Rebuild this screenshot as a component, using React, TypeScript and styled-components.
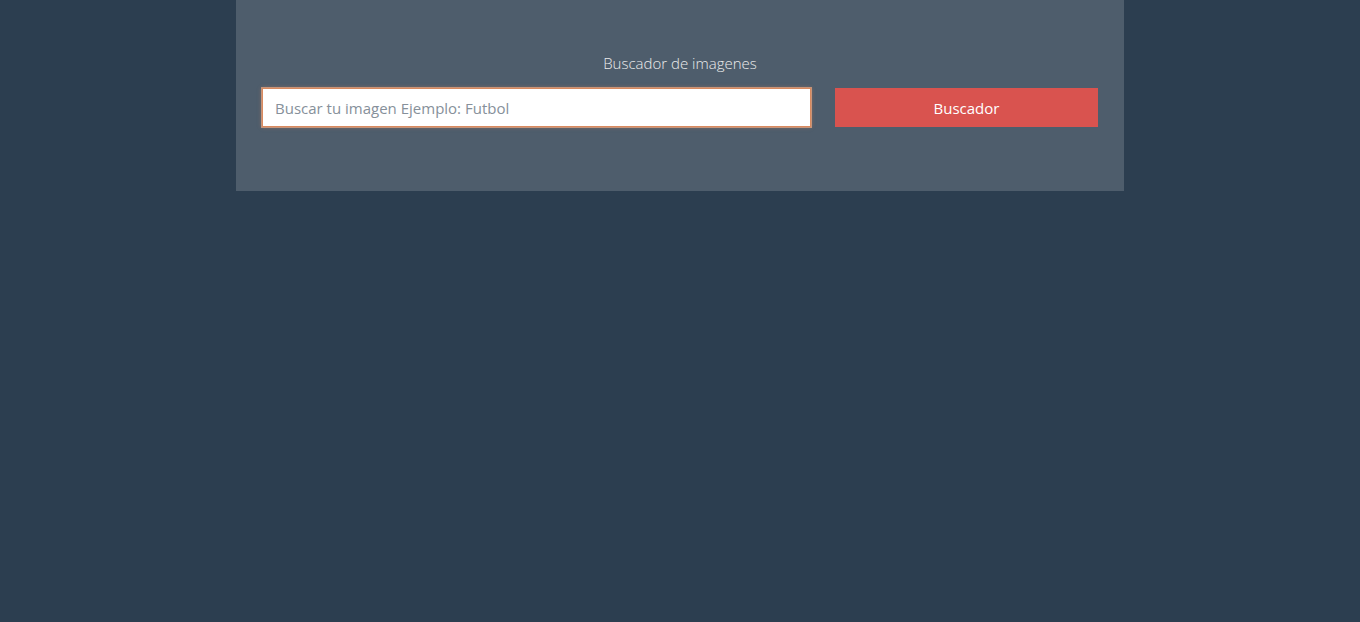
import React from "react";
import styled, { createGlobalStyle } from "styled-components";

const GlobalStyle = createGlobalStyle`
    html, body {
        margin: 0;
        padding: 0;
        background: #2c3e50;
        height: 100%;
    }
    body {
        font-family: "Open Sans", "Noto Sans", "Liberation Sans", sans-serif;
    }
`

export default function App() {
    return (
        <>
            <GlobalStyle />
            <Page>
                <Jumbotron>
                    <Lead>Buscador de imagenes</Lead>
                    <SearchForm onSubmit={(e) => e.preventDefault()}>
                        <SearchInput type="text" autoFocus placeholder="Buscar tu imagen Ejemplo: Futbol" />
                        <SearchButton type="submit">Buscador</SearchButton>
                    </SearchForm>
                </Jumbotron>
            </Page>
        </>
    )
}

const Page = styled.div`
    width: 888px;
    margin: 0 auto;
`

const Jumbotron = styled.div`
    background-color: #4e5d6c;
    padding: 54px 26px 64px;
    display: flex;
    flex-direction: column;
`

const Lead = styled.p`
    margin: 0 0 16px;
    text-align: center;
    color: #ebebeb;
    font-size: 15px;
    font-weight: 300;
    line-height: 18px;
`

const SearchForm = styled.form`
    display: grid;
    grid-template-columns: 549px 263px;
    column-gap: 24px;
`

const SearchInput = styled.input`
    box-sizing: border-box;
    height: 39px;
    padding: 0 12px;
    border: 1px solid #d98a5f;
    box-shadow: 0 0 0 1px rgba(240, 170, 130, 0.7), 0 0 4px rgba(230, 140, 90, 0.5);
    background: #fff;
    font-family: inherit;
    font-size: 15px;
    color: #333;
    outline: none;
    caret-color: #333;

    &::placeholder {
        color: #86909a;
    }
`

const SearchButton = styled.button`
    height: 39px;
    border: none;
    background-color: #d9534f;
    color: #fff;
    font-family: inherit;
    font-size: 15px;
    cursor: pointer;
`
